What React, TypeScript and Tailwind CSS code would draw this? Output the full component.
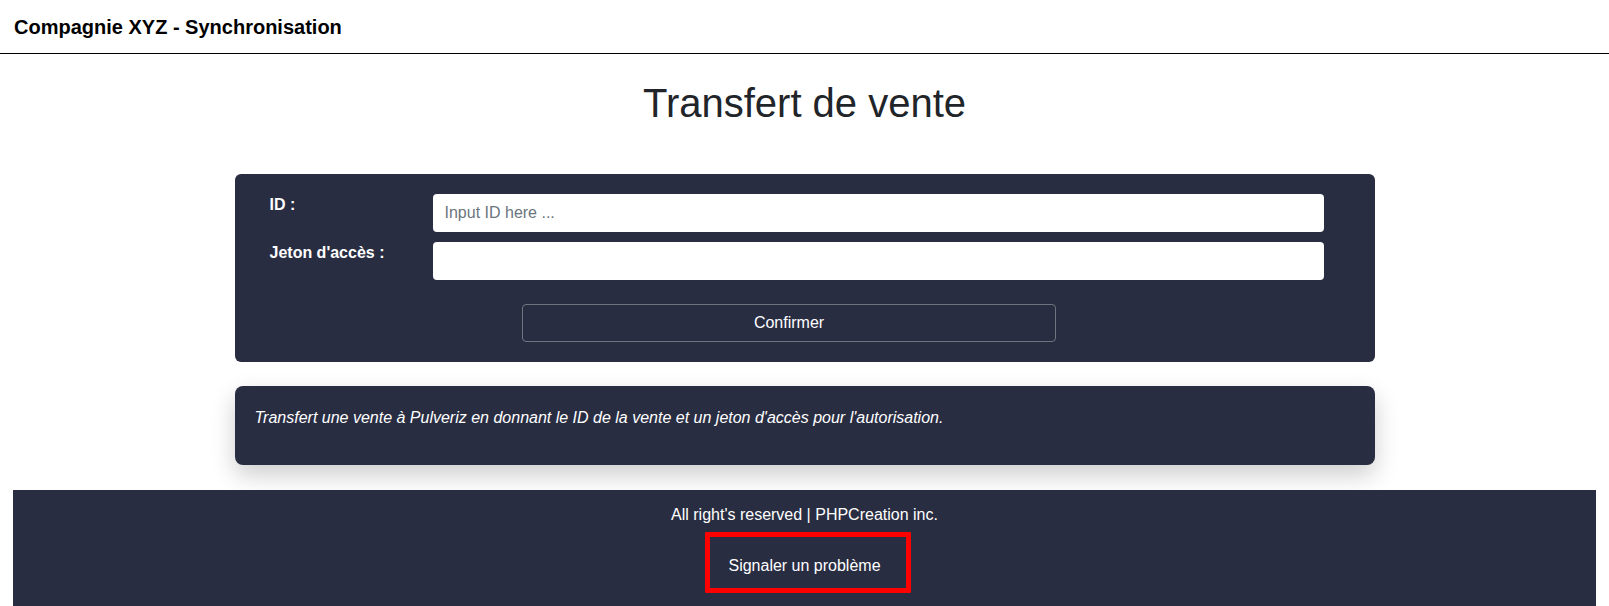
import React from "react";

export default function App() {
  return (
    <div className="min-h-screen bg-white text-[#212529] font-['Liberation_Sans',Arial,sans-serif]">
      <header className="h-[54px] border-b border-black flex items-center px-[14px]">
        <span className="font-bold text-[20px] text-black">Compagnie XYZ - Synchronisation</span>
      </header>

      <main>
        <h1 className="text-center text-[40px] leading-[48px] mt-[25px] mb-[47px]">
          Transfert de vente
        </h1>

        {/* form card */}
        <div className="mx-auto w-[1140px] bg-[#292d42] rounded-md pt-[20px] pb-[20px] pl-[35px] pr-[51px]">
          <div className="grid grid-cols-[163px_1fr] gap-y-[10px]">
            <label className="text-white font-bold text-base leading-[22px]">ID :</label>
            <input
              className="h-[38px] rounded bg-white px-3 text-base text-[#212529] placeholder:text-[#6c757d] outline-none"
              placeholder="Input ID here ..."
            />
            <label className="text-white font-bold text-base leading-[22px]">Jeton d'accès :</label>
            <input className="h-[38px] rounded bg-white px-3 text-base text-[#212529] outline-none" />
          </div>
          <div className="flex justify-center mt-[24px] pr-[15px]">
            <button className="w-[534px] h-[38px] rounded border border-[#6c757d] text-white text-base">
              Confirmer
            </button>
          </div>
        </div>

        {/* description */}
        <div className="mx-auto mt-[24px] w-[1140px] h-[79px] bg-[#292d42] rounded-lg px-[20px] pt-[20px] shadow-[0_10px_24px_rgba(0,0,0,0.2)]">
          <p className="italic text-white text-base leading-6">
            Transfert une vente à Pulveriz en donnant le ID de la vente et un jeton d'accès pour l'autorisation.
          </p>
        </div>

        <footer className="mt-[25px] mx-[13px] h-[130px] bg-[#292d42] flex flex-col items-center pt-[13px]">
          <p className="text-white text-base leading-6">All right's reserved | PHPCreation inc.</p>
          <div className="relative mt-[27px]">
            <span className="text-white text-base leading-6">Signaler un problème</span>
            {/* highlight annotation */}
            <div className="absolute left-[-23px] top-[-22px] w-[206px] h-[61px] border-[5px] border-[#ff0000] rounded-[1px]" />
          </div>
        </footer>
      </main>
    </div>
  );
}
